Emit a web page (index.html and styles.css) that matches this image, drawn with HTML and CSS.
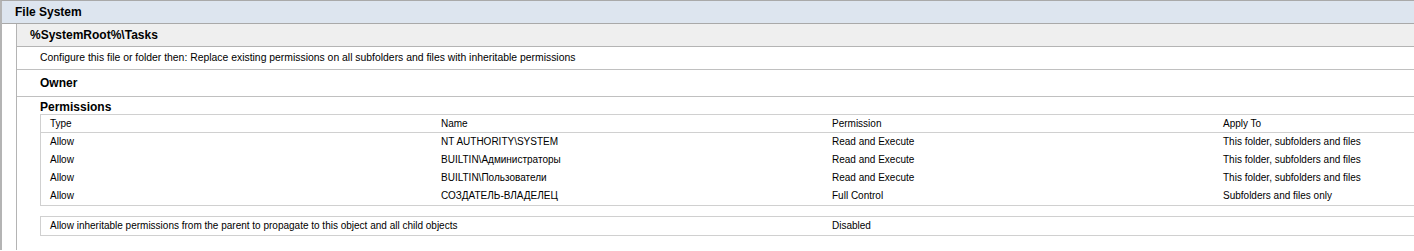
FILE: index.html
```html
<!DOCTYPE html>
<html>
<head>
<meta charset="utf-8">
<link rel="stylesheet" href="styles.css">
</head>
<body>
<div class="level1">
  <div class="band1">File System</div>
  <div class="level2">
    <div class="band2">%SystemRoot%\Tasks</div>
    <div class="line">Configure this file or folder then: Replace existing permissions on all subfolders and files with inheritable permissions</div>
    <div class="owner">Owner</div>
    <div class="perms">
      <div class="perms-title">Permissions</div>
      <div class="grid">
        <div class="grow head"><span>Type</span><span>Name</span><span>Permission</span><span>Apply To</span></div>
        <div class="grow"><span>Allow</span><span>NT AUTHORITY\SYSTEM</span><span>Read and Execute</span><span>This folder, subfolders and files</span></div>
        <div class="grow"><span>Allow</span><span>BUILTIN\Администраторы</span><span>Read and Execute</span><span>This folder, subfolders and files</span></div>
        <div class="grow"><span>Allow</span><span>BUILTIN\Пользователи</span><span>Read and Execute</span><span>This folder, subfolders and files</span></div>
        <div class="grow"><span>Allow</span><span>СОЗДАТЕЛЬ-ВЛАДЕЛЕЦ</span><span>Full Control</span><span>Subfolders and files only</span></div>
      </div>
      <div class="grid inherit">
        <div class="grow wide"><span>Allow inheritable permissions from the parent to propagate to this object and all child objects</span><span>Disabled</span></div>
      </div>
    </div>
  </div>
</div>
</body>
</html>
```

FILE: styles.css
```css
html, body {
  margin: 0;
  padding: 0;
  background: #ffffff;
  overflow: hidden;
}
body {
  font-family: "Liberation Sans", Arial, sans-serif;
  font-size: 11px;
  color: #000;
}
.level1 {
  border-top: 1px solid #a9a9a9;
  border-left: 2px solid #b4b4b4;
  height: 250px;
  box-sizing: border-box;
}
.band1 {
  height: 22px;
  line-height: 22px;
  background: #dde5ef;
  border-bottom: 1px solid #a9a9a9;
  padding-left: 13px;
  font-weight: bold;
  font-size: 12px;
}
.level2 {
  margin-left: 14px;
  border-left: 1px solid #b4b4b4;
  height: 228px;
}
.band2 {
  height: 22px;
  line-height: 22px;
  background: #efefef;
  border-bottom: 1px solid #b4b4b4;
  padding-left: 13px;
  font-weight: bold;
  font-size: 12px;
}
.line {
  height: 22px;
  line-height: 22px;
  border-bottom: 1px solid #c0c0c0;
  padding-left: 23px;
  font-size: 10.4px;
}
.owner {
  height: 26px;
  line-height: 26px;
  border-bottom: 1px solid #c0c0c0;
  padding-left: 23px;
  font-weight: bold;
  font-size: 12px;
}
.perms {
  padding-left: 23px;
  padding-top: 3px;
}
.perms-title {
  font-weight: bold;
  font-size: 12px;
  height: 14px;
  line-height: 14px;
}
.grid {
  border: 1px solid #d0d0d0;
  border-right: none;
  overflow: hidden;
  font-size: 10px;
}
.grow {
  display: grid;
  grid-template-columns: 391px 391px 391px 391px;
  height: 18px;
  line-height: 18px;
  white-space: nowrap;
}
.grow span {
  padding-left: 9px;
}
.grow.head {
  height: 17px;
  line-height: 17px;
  border-bottom: 1px solid #d0d0d0;
}
.inherit {
  margin-top: 10px;
}
.grow.wide {
  grid-template-columns: 782px 391px;
}
```
